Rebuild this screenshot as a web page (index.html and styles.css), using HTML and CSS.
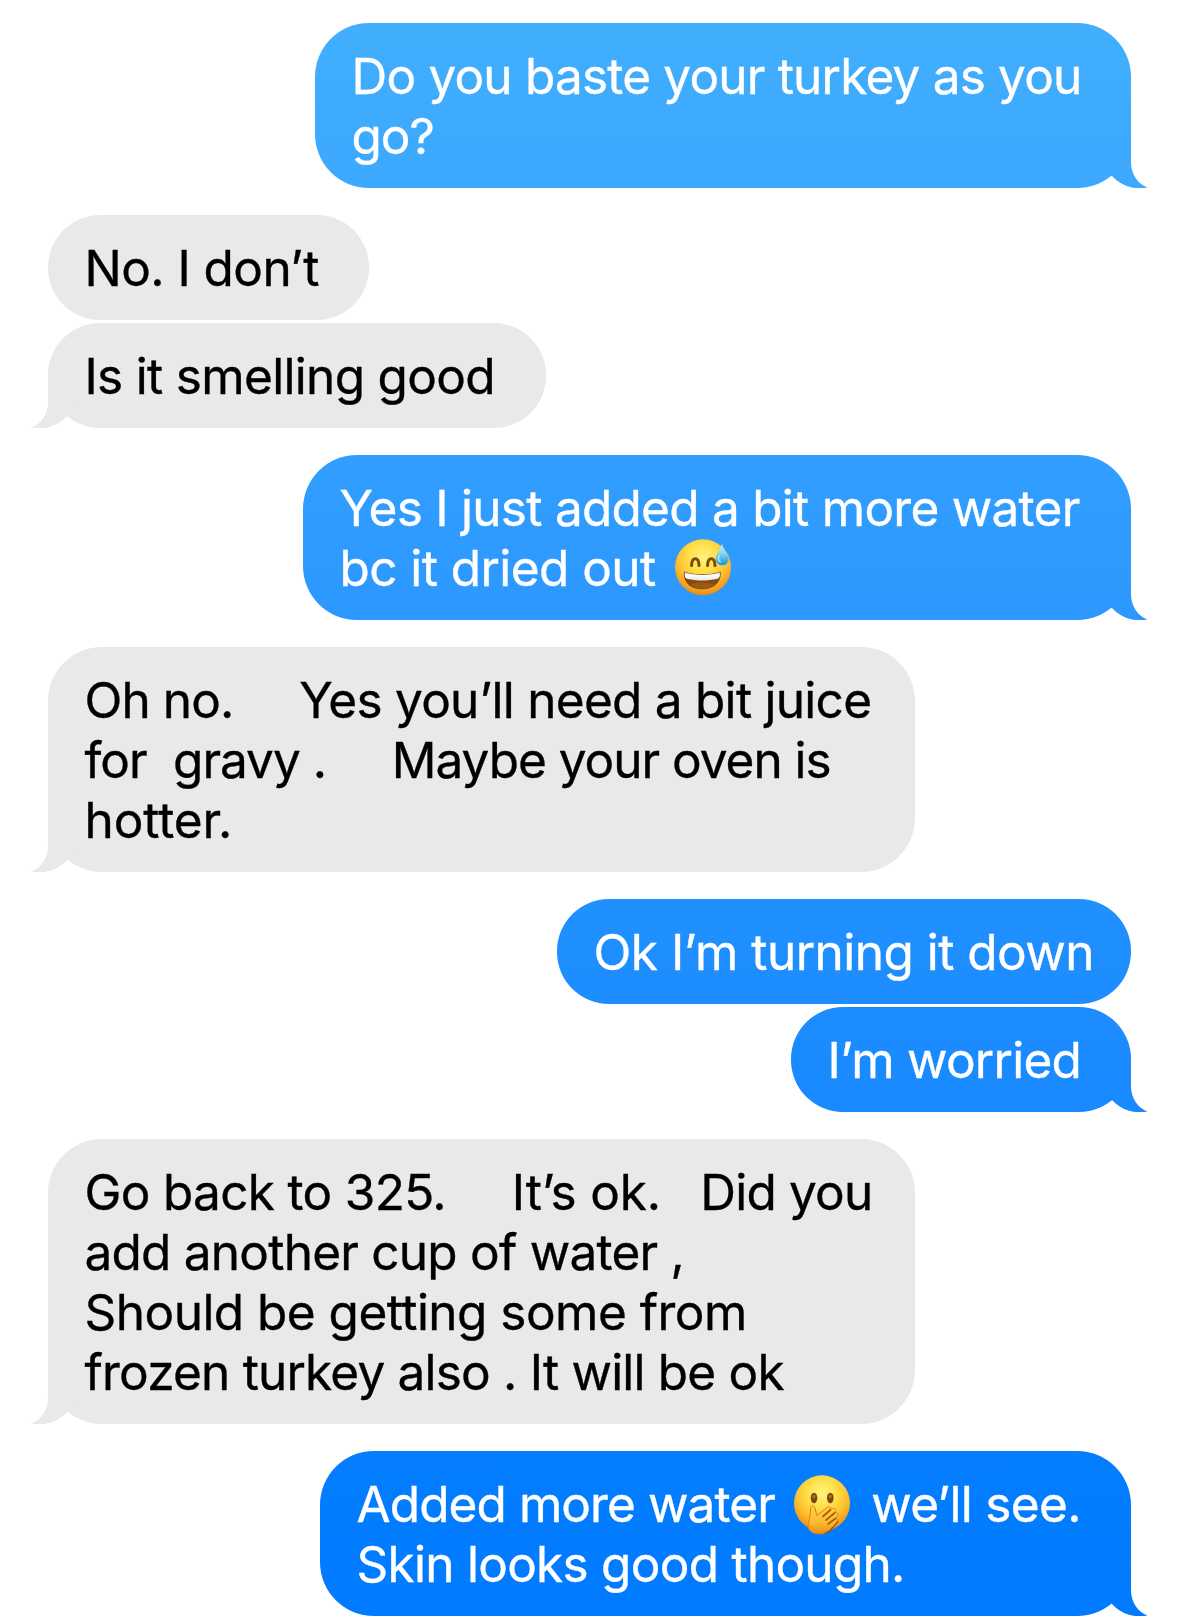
FILE: index.html
```html
<!DOCTYPE html>
<html lang="en">
<head>
<meta charset="utf-8">
<title>Messages</title>
<link rel="stylesheet" href="styles.css">
</head>
<body>
<main class="thread">
  <section class="group sent">
    <div class="bubble tall tail w-816">
      <p class="line ls-80">Do you baste your turkey as you</p>
      <p class="line ls-100">go?</p>
    </div>
  </section>

  <section class="group received">
    <div class="bubble w-321"><p class="line ls-57">No. I don’t</p></div>
    <div class="bubble tail w-498"><p class="line ls-68">Is it smelling good</p></div>
  </section>

  <section class="group sent">
    <div class="bubble tall tail w-828">
      <p class="line">Yes I just added a bit more water</p>
      <p class="line ls-57">bc it dried out <svg class="emoji" viewBox="0 0 56 60" role="img" aria-label="grinning face with sweat">
        <defs>
          <radialGradient id="face" cx=".5" cy=".32" r=".7">
            <stop offset="0" stop-color="#fff27c"/><stop offset=".35" stop-color="#ffe24a"/><stop offset=".65" stop-color="#fdc130"/><stop offset=".88" stop-color="#f59a1e"/><stop offset="1" stop-color="#e48110"/>
          </radialGradient>
          <linearGradient id="drop" x1="0" y1="0" x2="0" y2="1">
            <stop offset="0" stop-color="#d9f3fb"/><stop offset=".5" stop-color="#7fd0f2"/><stop offset="1" stop-color="#1193dc"/>
          </linearGradient>
          <linearGradient id="teeth" x1="0" y1="0" x2="0" y2="1">
            <stop offset="0" stop-color="#cfd3d8"/><stop offset=".35" stop-color="#fff"/><stop offset="1" stop-color="#e4e6ea"/>
          </linearGradient>
        </defs>
        <circle cx="28" cy="28.3" r="28" fill="url(#face)"/>
        <path d="M16.6 26.500C16.600 17.500 24 17.500 24 26.500M32.600 26.500C32.600 17.500 40 17.500 40 26.500" fill="none" stroke="#7d4a0c" stroke-width="3.100" stroke-linecap="round"/>
        <path d="M9 32.500C20 36.300 35 36.300 45.500 32.500C47 43 39 50.300 27.200 50.300S7.500 43 9 32.500Z" fill="#84490d"/>
        <path d="M15 45Q27 42 39 45Q35 49.800 27.200 49.800T15 45Z" fill="#9a5a14"/>
        <path d="M9.800 33.300C21 37 34 37 44.800 33.300C45.300 37.500 44.300 39.300 42.500 39.800C32 42.200 22 42.200 12 39.800C10.200 39.300 9.400 37.500 9.800 33.300Z" fill="url(#teeth)"/>
        <path d="M47 4.200C47.500 10 53.700 14 53.700 20A6.500 6.300 0 0 1 40.700 20C40.700 14 46.500 10 47 4.200Z" fill="url(#drop)"/>
        <path d="M44.200 17C43 19.500 43.500 22 45.500 23" fill="none" stroke="#fff" stroke-width="1.300" stroke-linecap="round" opacity=".7"/>
      </svg></p>
    </div>
  </section>

  <section class="group received">
    <div class="bubble tall tail w-867">
      <p class="line"><span class="ls-91">Oh no.</span>     <span class="ls-73">Yes you’ll need a bit juice</span></p>
      <p class="line"><span class="ls-100">for</span>  <span class="ls-100">gravy .</span>     <span class="ls-100">Maybe your oven is</span></p>
      <p class="line ls-10">hotter.</p>
    </div>
  </section>

  <section class="group sent">
    <div class="bubble w-574"><p class="line ls-52">Ok I’m turning it down</p></div>
    <div class="bubble tail w-340"><p class="line">I’m worried</p></div>
  </section>

  <section class="group received">
    <div class="bubble tall tail w-867">
      <p class="line"><span class="ls-68">Go back to 325.</span>     <span class="ls-20">It’s ok.</span>   <span class="ls-80">Did you</span></p>
      <p class="line ls-76">add another cup of water ,</p>
      <p class="line ls-52">Should be getting some from</p>
      <p class="line ls-80">frozen turkey also . It will be ok</p>
    </div>
  </section>

  <section class="group sent">
    <div class="bubble tall tail w-811">
      <p class="line"><span class="ls-91">Added more water</span> <svg class="emoji" viewBox="0 0 56 60" role="img" aria-label="face with hand over mouth">
        <defs>
          <linearGradient id="hand" x1="0" y1="0" x2="0" y2="1">
            <stop offset="0" stop-color="#ffcf48"/><stop offset=".6" stop-color="#ffbb30"/><stop offset="1" stop-color="#ec8a14"/>
          </linearGradient>
        </defs>
        <circle cx="28" cy="28.3" r="28" fill="url(#face)"/>
        <ellipse cx="20" cy="23" rx="3.300" ry="5.200" fill="#78470c"/>
        <ellipse cx="36.300" cy="23" rx="3.300" ry="5.200" fill="#78470c"/>
        <ellipse cx="20" cy="21.500" rx="1.500" ry="2" fill="#a87422"/>
        <ellipse cx="36.300" cy="21.500" rx="1.500" ry="2" fill="#a87422"/>
        <path d="M16.500 34C16.300 30.300 20.300 29.700 21 33.300L22.800 40.500L33.300 32.300C35.800 30.500 38 33 36.300 35L37.600 34C40.600 32 43 35 41 37.200L40.200 38.200C43 36.300 45 39 43.300 41.200L41.500 43.500C43.500 42.700 44.800 44.700 43.500 46.500C40 51 36.500 56.500 30.500 58.300C24 60 18 58.500 15 54.500C12.500 50.500 16.700 43 16.500 34Z" fill="url(#hand)" stroke="#d8790c" stroke-width=".9"/>
        <path d="M36.300 35L29 41.500M40.500 38L32 45.200M41.500 43.500L34.200 49" fill="none" stroke="#a35c0b" stroke-width="1.700" stroke-linecap="round"/>
        <path d="M43.600 46.500C40 51.500 37 56.500 31 58.200" fill="none" stroke="#9c560b" stroke-width="1.300" stroke-linecap="round"/>
      </svg> <span class="ls-68">we’ll see.</span></p>
      <p class="line">Skin looks good though.</p>
    </div>
  </section>
</main>
</body>
</html>
```

FILE: styles.css
```css
body {
  --sent: linear-gradient(#43affd 0, #3ca8ff 188px, #329eff 455px, #2c98ff 620px, #2190ff 899px, #1889ff 1112px, #047eff 1451px, #007aff 1616px);
  margin: 0;
  background: #fff;
  font: 49.5px/60px Inter, "Liberation Sans", sans-serif;
  letter-spacing: -0.73px;
  -webkit-text-stroke: 0.35px currentColor;
}

.thread {
  display: flex;
  flex-direction: column;
  gap: 27px;
  padding: 23px 48px 7px;
}

.group {
  display: flex;
  flex-direction: column;
  gap: 3px;
}

.sent { align-items: flex-end; color: #fff; }
.received { align-items: flex-start; color: #000; }

.bubble {
  position: relative;
  box-sizing: border-box;
  padding: 23px 36.5px 22px;
  border-radius: 52px;
}

.tall { border-radius: 54px; }

.sent .bubble { background: var(--sent) fixed; }
.received .bubble { background: #e9e9eb; }

.line {
  height: 60px;
  margin: 0;
  white-space: pre;
}

/* Speech tail hanging off the lower outer corner */
.tail::after {
  content: "";
  position: absolute;
  right: -18px;
  bottom: 0;
  width: 58px;
  height: 52px;
  clip-path: path("M0 0H40V26C40 37.500 46 47.500 56.500 51.500C43 54 31 50.500 21 40L0 20Z");
}

.sent .tail::after { background: var(--sent) fixed; }

.received .tail::after {
  right: auto;
  left: -18px;
  background: #e9e9eb;
  transform: scaleX(-1);
}

.emoji {
  width: 56px;
  height: 60px;
  margin: -3px 8px 0 6px;
  vertical-align: -13px;
}

.w-321 { width: 321px; }
.w-340 { width: 340px; }
.w-498 { width: 498px; }
.w-574 { width: 574px; }
.w-811 { width: 811px; }
.w-816 { width: 816px; }
.w-828 { width: 828px; }
.w-867 { width: 867px; }

.ls-10 { letter-spacing: -0.1px; }
.ls-20 { letter-spacing: -0.2px; }
.ls-52 { letter-spacing: -0.52px; }
.ls-57 { letter-spacing: -0.56px; }
.ls-68 { letter-spacing: -0.68px; }
.ls-73 { letter-spacing: -0.73px; }
.ls-76 { letter-spacing: -0.76px; }
.ls-80 { letter-spacing: -0.8px; }
.ls-91 { letter-spacing: -0.91px; }
.ls-100 { letter-spacing: -1.01px; }
```
